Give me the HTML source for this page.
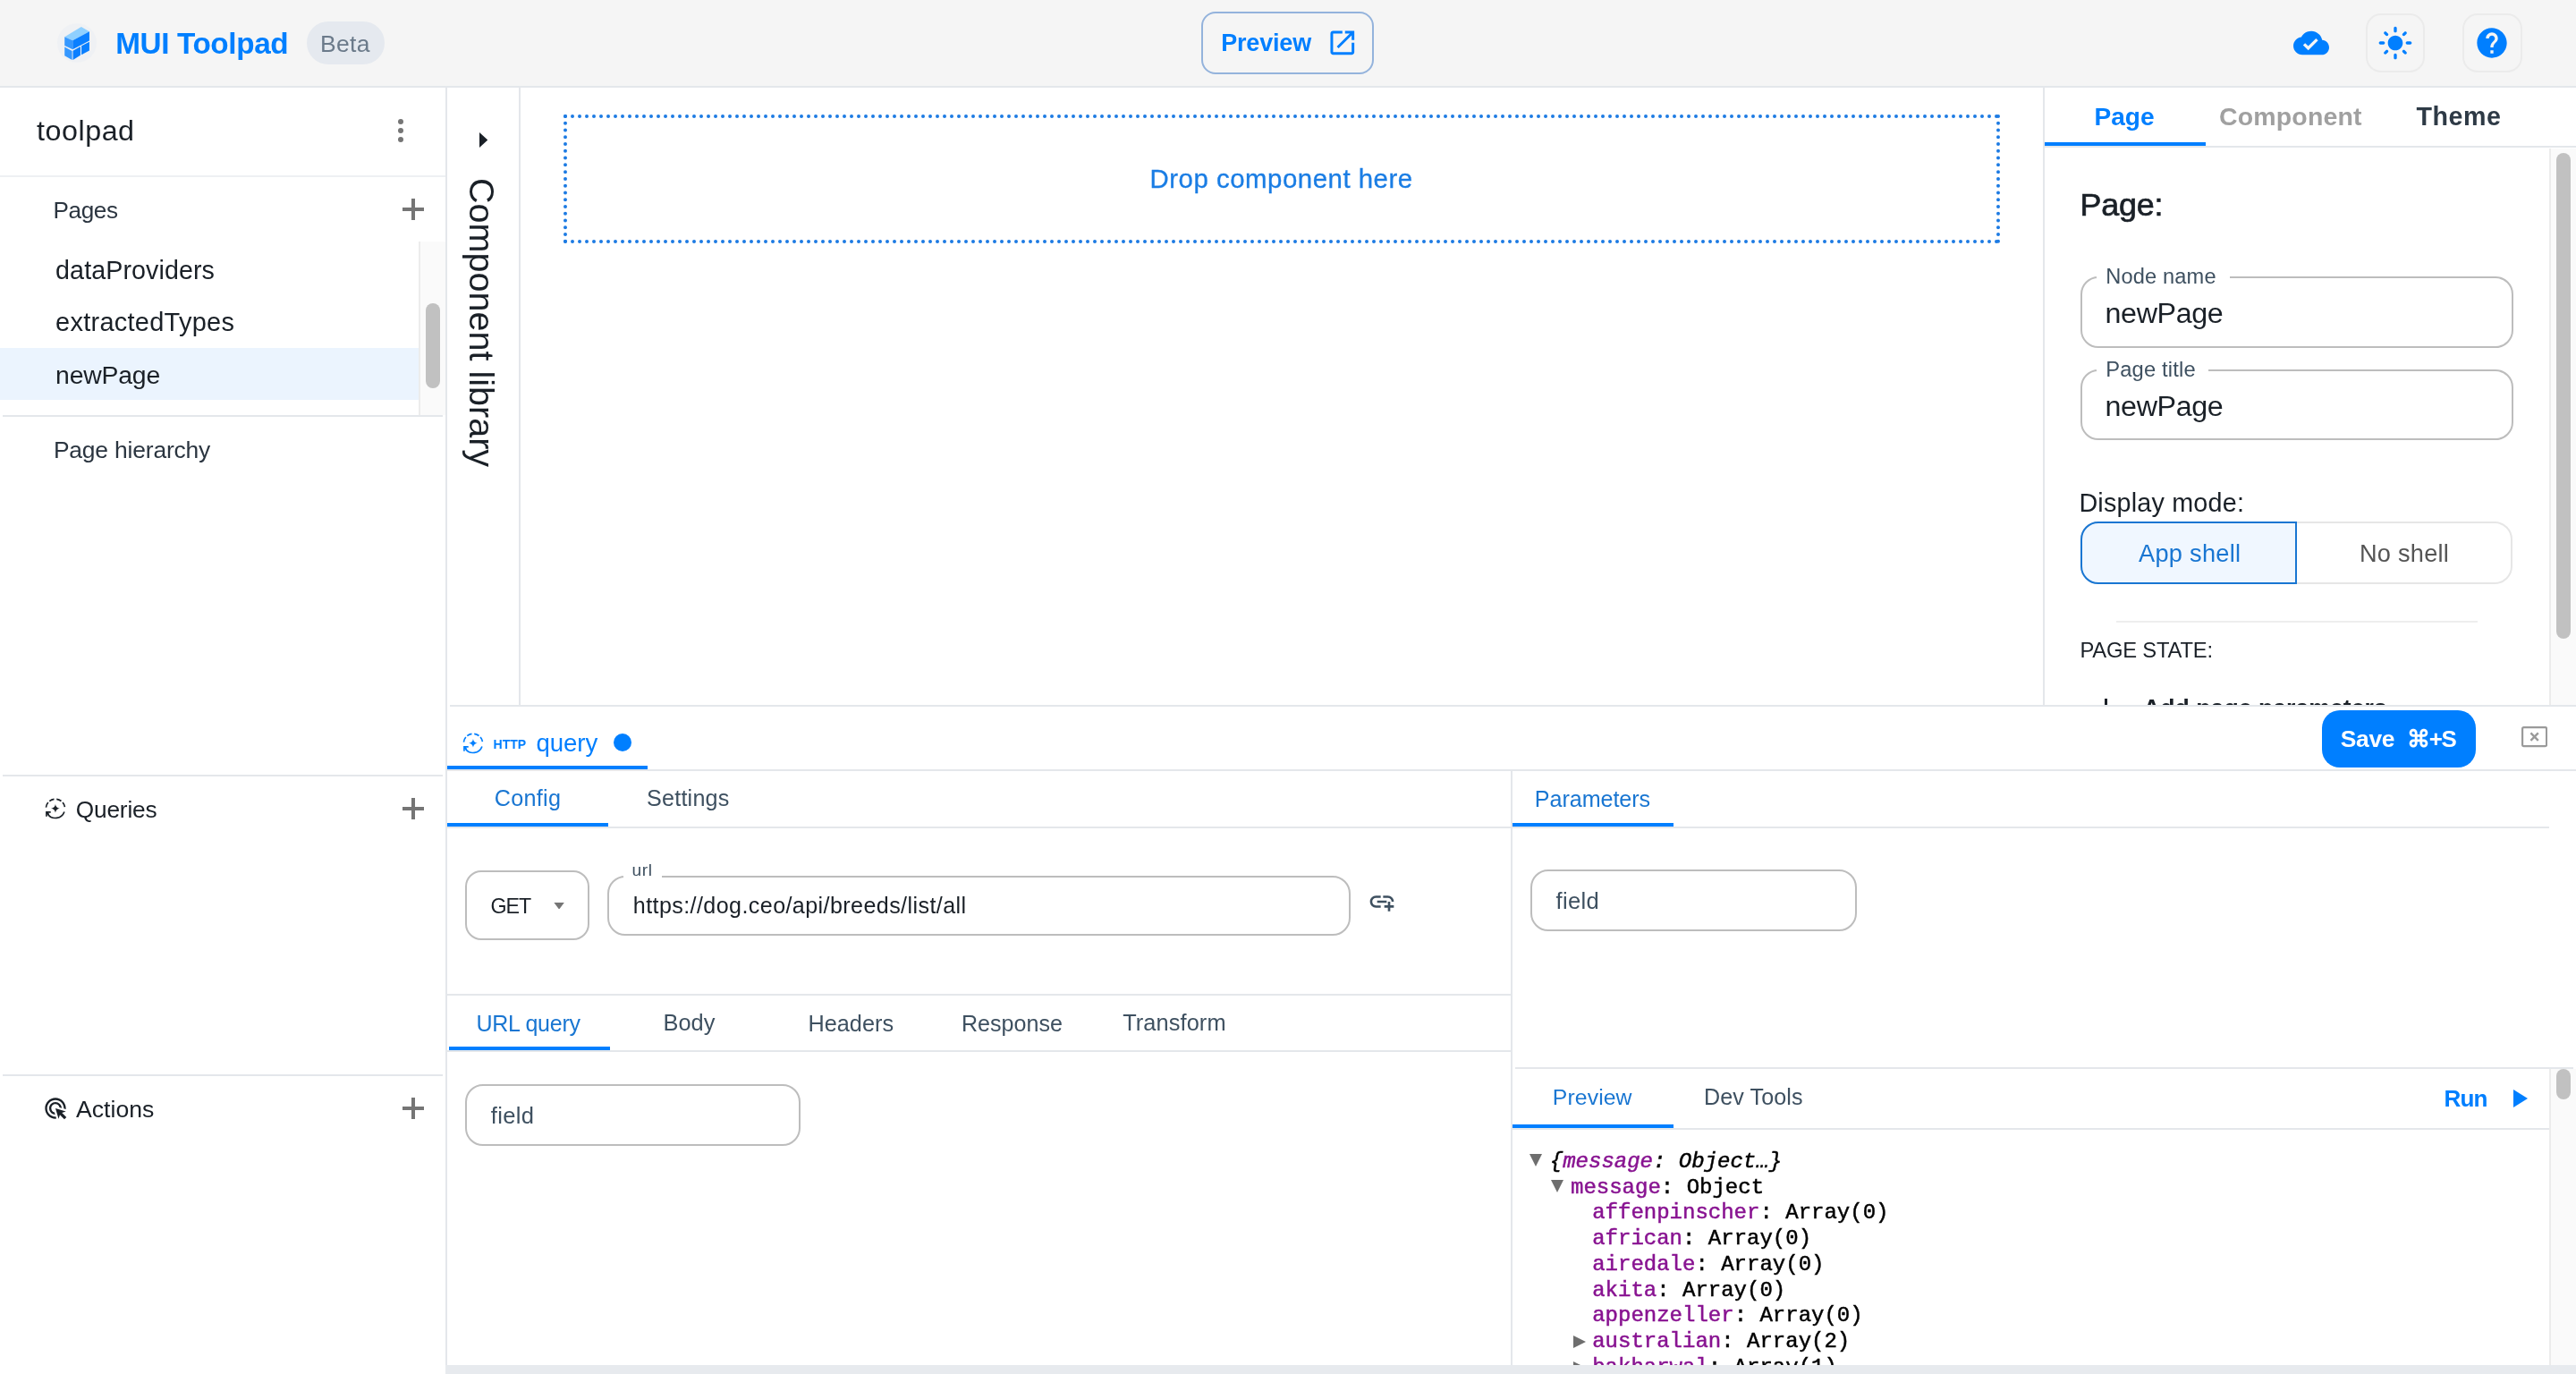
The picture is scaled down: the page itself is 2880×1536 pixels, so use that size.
<!DOCTYPE html>
<html><head><meta charset="utf-8"><title>MUI Toolpad</title>
<style>
html,body{margin:0;padding:0;background:#fff;overflow:hidden}
#root{zoom:2;position:relative;width:1440px;height:768px;overflow:hidden;will-change:transform}
.t{position:absolute;white-space:nowrap;line-height:normal;font-family:"Liberation Sans",sans-serif}
.r{position:absolute}
@media (max-width:2000px){#root{zoom:1}}
</style></head><body><div id="root">
<div class="r" style="left:0px;top:0px;width:1440px;height:48px;background:#f5f5f5"></div>
<div class="r" style="left:0px;top:48px;width:1440px;height:1px;background:#e4e7eb"></div>
<div class="r" style="left:32px;top:12.8px;width:22px;height:22px;background:#edf0f4;border-radius:50%;opacity:.8"></div>
<svg class="r" style="left:35.8px;top:14.3px;width:14.2px;height:19.1px" viewBox="335 270 610 820">
<polygon points="340,535 740,290 935,405 535,620" fill="#8fd0ff"/>
<polygon points="340,535 535,620 535,835 340,745" fill="#3598ff"/>
<polygon points="535,620 935,405 935,625 535,835" fill="#0a7fff"/>
<polygon points="340,775 520,870 520,1085 340,985" fill="#3598ff"/>
<polygon points="540,865 720,765 720,975 540,1085" fill="#0a7fff"/>
<polygon points="745,750 935,650 935,860 745,960" fill="#0a7fff"/>
</svg>
<div class="t" style="left:64.60px;top:15.20px;font-size:16.635px;letter-spacing:-0.184px;font-weight:700;font-style:normal;color:#007fff;font-family:'Liberation Sans',sans-serif;">MUI Toolpad</div>
<div class="r" style="left:171.5px;top:12px;width:43.5px;height:24px;background:#e5e9ef;border-radius:12px"></div>
<div class="t" style="left:179.00px;top:17.01px;font-size:13.243px;letter-spacing:0.179px;font-weight:400;font-style:normal;color:#6b7a8a;font-family:'Liberation Sans',sans-serif;">Beta</div>
<div class="r" style="left:671.6px;top:6.6px;width:96.6px;height:34.8px;box-sizing:border-box;border:1px solid #94b3dc;border-radius:8px"></div>
<div class="t" style="left:682.60px;top:16.25px;font-size:13.474px;letter-spacing:-0.073px;font-weight:700;font-style:normal;color:#007fff;font-family:'Liberation Sans',sans-serif;">Preview</div>
<svg class="r" style="left:741.65px;top:14.95px;width:17.8px;height:17.8px" viewBox="0 0 24 24"><path fill="#007fff" d="M19 19H5V5h7V3H5c-1.11 0-2 .9-2 2v14c0 1.1.89 2 2 2h14c1.1 0 2-.9 2-2v-7h-2v7zM14 3v2h3.59l-9.83 9.83 1.41 1.41L19 6.41V10h2V3h-7z"/></svg>
<svg class="r" style="left:1282px;top:14.2px;width:20px;height:20px" viewBox="0 0 24 24"><path fill="#007fff" d="M19.35 10.04C18.67 6.59 15.64 4 12 4 9.11 4 6.6 5.64 5.35 8.04 2.34 8.36 0 10.91 0 14c0 3.31 2.69 6 6 6h13c2.76 0 5-2.24 5-5 0-2.64-2.05-4.78-4.65-4.96zM10 17l-3.5-3.5 1.41-1.41L10 14.17 15.18 9l1.41 1.41L10 17z"/></svg>
<div class="r" style="left:1322.3px;top:7.45px;width:33.1px;height:33.1px;box-sizing:border-box;border:1px solid #ebebeb;border-radius:8.5px"></div>
<svg class="r" style="left:1329px;top:14px;width:20px;height:20px" viewBox="0 0 24 24"><path fill="#007fff" d="M12 7c-2.76 0-5 2.24-5 5s2.24 5 5 5 5-2.24 5-5-2.24-5-5-5zM2 13h2c.55 0 1-.45 1-1s-.45-1-1-1H2c-.55 0-1 .45-1 1s.45 1 1 1zm18 0h2c.55 0 1-.45 1-1s-.45-1-1-1h-2c-.55 0-1 .45-1 1s.45 1 1 1zM11 2v2c0 .55.45 1 1 1s1-.45 1-1V2c0-.55-.45-1-1-1s-1 .45-1 1zm0 18v2c0 .55.45 1 1 1s1-.45 1-1v-2c0-.55-.45-1-1-1s-1 .45-1 1zM5.99 4.58c-.39-.39-1.03-.39-1.41 0-.39.39-.39 1.03 0 1.41l1.06 1.06c.39.39 1.03.39 1.41 0s.39-1.03 0-1.41L5.99 4.58zm12.37 12.37c-.39-.39-1.03-.39-1.41 0-.39.39-.39 1.03 0 1.41l1.06 1.06c.39.39 1.03.39 1.41 0 .39-.39.39-1.03 0-1.41l-1.06-1.06zm1.06-10.96c.39-.39.39-1.03 0-1.41-.39-.39-1.03-.39-1.41 0l-1.06 1.06c-.39.39-.39 1.03 0 1.41s1.03.39 1.41 0l1.06-1.06zM7.05 18.36c.39-.39.39-1.03 0-1.41-.39-.39-1.03-.39-1.41 0l-1.06 1.06c-.39.39-.39 1.03 0 1.41s1.03.39 1.41 0l1.06-1.06z"/></svg>
<div class="r" style="left:1376.4px;top:7.45px;width:33.4px;height:33.1px;box-sizing:border-box;border:1px solid #ebebeb;border-radius:8.5px"></div>
<svg class="r" style="left:1383px;top:14px;width:20px;height:20px" viewBox="0 0 24 24"><path fill="#007fff" d="M12 2C6.48 2 2 6.48 2 12s4.48 10 10 10 10-4.48 10-10S17.52 2 12 2zm1 17h-2v-2h2v2zm2.07-7.75-.9.92C13.45 12.9 13 13.5 13 15h-2v-.5c0-1.1.45-2.1 1.17-2.83l1.24-1.26c.37-.36.59-.86.59-1.41 0-1.1-.9-2-2-2s-2 .9-2 2H8c0-2.21 1.79-4 4-4s4 1.79 4 4c0 .88-.36 1.68-.93 2.25z"/></svg>
<div class="r" style="left:249px;top:49px;width:1px;height:719px;background:#e4e7eb"></div>
<div class="t" style="left:20.50px;top:64.15px;font-size:16.132px;letter-spacing:0.271px;font-weight:400;font-style:normal;color:#1a2027;font-family:'Liberation Sans',sans-serif;">toolpad</div>
<div class="r" style="left:222.3px;top:66.30000000000001px;width:3.2px;height:3.2px;background:#757575;border-radius:50%"></div>
<div class="r" style="left:222.3px;top:71.45px;width:3.2px;height:3.2px;background:#757575;border-radius:50%"></div>
<div class="r" style="left:222.3px;top:76.4px;width:3.2px;height:3.2px;background:#757575;border-radius:50%"></div>
<div class="r" style="left:0px;top:98px;width:249px;height:1px;background:#eef0f3"></div>
<div class="t" style="left:29.75px;top:110.10px;font-size:13.043px;letter-spacing:-0.191px;font-weight:400;font-style:normal;color:#2b3540;font-family:'Liberation Sans',sans-serif;">Pages</div>
<div class="r" style="left:225px;top:116.15px;width:12px;height:1.7px;background:#757575"></div>
<div class="r" style="left:230.15px;top:111px;width:1.7px;height:12px;background:#757575"></div>
<div class="r" style="left:0px;top:194.6px;width:234px;height:29px;background:#ebf4fe"></div>
<div class="t" style="left:31.05px;top:143.02px;font-size:14.339px;letter-spacing:0.043px;font-weight:400;font-style:normal;color:#1a2027;font-family:'Liberation Sans',sans-serif;">dataProviders</div>
<div class="t" style="left:31.05px;top:171.88px;font-size:14.492px;letter-spacing:0.128px;font-weight:400;font-style:normal;color:#1a2027;font-family:'Liberation Sans',sans-serif;">extractedTypes</div>
<div class="t" style="left:31.05px;top:201.27px;font-size:14.181px;letter-spacing:-0.099px;font-weight:400;font-style:normal;color:#1a2027;font-family:'Liberation Sans',sans-serif;">newPage</div>
<div class="r" style="left:234px;top:135px;width:15px;height:97px;background:#fafafa;box-sizing:border-box;border-left:1px solid #ececec"></div>
<div class="r" style="left:238px;top:169.5px;width:8px;height:47.5px;background:#c1c1c1;border-radius:4px"></div>
<div class="r" style="left:1.5px;top:232px;width:246px;height:1px;background:#e4e7eb"></div>
<div class="t" style="left:29.94px;top:244.24px;font-size:13.212px;letter-spacing:-0.084px;font-weight:400;font-style:normal;color:#2b3540;font-family:'Liberation Sans',sans-serif;">Page hierarchy</div>
<div class="r" style="left:1.5px;top:433px;width:246px;height:1px;background:#e4e7eb"></div>
<svg class="r" style="left:23.0px;top:444.0px;width:16px;height:16px" viewBox="0 0 1374 1374" fill="none" stroke="#1a2027" stroke-width="72">
<path d="M233,625 A455,455 0 0 1 336,388 M399,326 A455,455 0 0 1 622,229 M740,228 A455,455 0 0 1 965,321 M1034,388 A455,455 0 0 1 1134,609 M1113,836 A455,455 0 0 1 312,941"/><path d="M255,1065 L255,855 L460,855 M255,855 L370,970"/><path d="M685,470 Q712,652 890,680 Q712,708 685,885 Q658,708 475,680 Q658,652 685,470Z" fill="#1a2027" stroke="none"/></svg>
<div class="t" style="left:42.40px;top:445.02px;font-size:13.132px;letter-spacing:-0.091px;font-weight:400;font-style:normal;color:#1a2027;font-family:'Liberation Sans',sans-serif;">Queries</div>
<div class="r" style="left:225px;top:451.15px;width:12px;height:1.7px;background:#757575"></div>
<div class="r" style="left:230.15px;top:446px;width:1.7px;height:12px;background:#757575"></div>
<div class="r" style="left:1.5px;top:600.5px;width:246px;height:1px;background:#e4e7eb"></div>
<svg class="r" style="left:24px;top:612.5px;width:14px;height:14px" viewBox="0 0 24 24"><path fill="#1a2027" d="M11.71 17.99C8.53 17.84 6 15.22 6 12c0-3.31 2.69-6 6-6 3.22 0 5.84 2.53 5.99 5.71l-2.1-.63C15.48 9.31 13.89 8 12 8c-2.21 0-4 1.79-4 4 0 1.89 1.31 3.48 3.08 3.89l.63 2.1zM22 12c0 .3-.01.6-.04.9l-1.97-.59c.01-.1.01-.21.01-.31 0-4.42-3.58-8-8-8s-8 3.58-8 8 3.58 8 8 8c.1 0 .21 0 .31-.01l.59 1.97c-.3.03-.6.04-.9.04-5.52 0-10-4.48-10-10S6.48 2 12 2s10 4.48 10 10zm-3.77 4.26L22 15l-10-3 3 10 1.26-3.77 4.27 4.27 1.98-1.98-4.28-4.26z"/></svg>
<div class="t" style="left:42.50px;top:612.36px;font-size:13.300px;letter-spacing:0.011px;font-weight:400;font-style:normal;color:#1a2027;font-family:'Liberation Sans',sans-serif;">Actions</div>
<div class="r" style="left:225px;top:618.65px;width:12px;height:1.7px;background:#757575"></div>
<div class="r" style="left:230.15px;top:613.5px;width:1.7px;height:12px;background:#757575"></div>
<div class="r" style="left:290px;top:49px;width:1px;height:345px;background:#e4e7eb"></div>
<svg class="r" style="left:268px;top:73.75px;width:4.6px;height:8.5px" viewBox="0 0 4.6 8.5"><polygon points="0,0 4.6,4.25 0,8.5" fill="#1a2027"/></svg>
<div class="t" style="left:280.40px;top:99.4px;font-size:19.78px;color:#1a2027;transform-origin:0 0;transform:rotate(90deg)">Component library</div>
<div class="r" style="left:315px;top:64px;width:803px;height:72px;box-sizing:border-box;border:2px dotted #1d7be3"></div>
<div class="t" style="left:642.75px;top:91.69px;font-size:14.703px;letter-spacing:0.260px;font-weight:400;font-style:normal;color:#1a7de4;font-family:'Liberation Sans',sans-serif;-webkit-text-stroke-width:0.15px">Drop component here</div>
<div class="r" style="left:1142px;top:49px;width:1px;height:345px;background:#e4e7eb"></div>
<div class="r" style="left:1143px;top:81.5px;width:297px;height:1px;background:#e4e7eb"></div>
<div class="r" style="left:1143px;top:79.5px;width:90px;height:2px;background:#007fff"></div>
<div class="t" style="left:1170.75px;top:57.29px;font-size:14.045px;letter-spacing:0.001px;font-weight:700;font-style:normal;color:#007fff;font-family:'Liberation Sans',sans-serif;">Page</div>
<div class="t" style="left:1240.50px;top:57.11px;font-size:14.247px;letter-spacing:0.079px;font-weight:700;font-style:normal;color:#a0a0a0;font-family:'Liberation Sans',sans-serif;">Component</div>
<div class="t" style="left:1350.75px;top:57.03px;font-size:14.328px;letter-spacing:0.264px;font-weight:700;font-style:normal;color:#2e3a46;font-family:'Liberation Sans',sans-serif;">Theme</div>
<div class="r" style="left:1425px;top:83px;width:15px;height:311px;background:#fafafa;box-sizing:border-box;border-left:1px solid #ececec"></div>
<div class="r" style="left:1429px;top:85.5px;width:8px;height:271.3px;background:#c1c1c1;border-radius:4px"></div>
<div class="t" style="left:1162.75px;top:104.66px;font-size:17.945px;letter-spacing:-0.086px;font-weight:400;font-style:normal;color:#1a2027;font-family:'Liberation Sans',sans-serif;-webkit-text-stroke:0.35px #1a2027">Page:</div>
<div class="r" style="left:1163.2px;top:154.5px;width:241.8px;height:40px;box-sizing:border-box;border:1px solid #bdbdbd;border-radius:10px"></div>
<div class="r" style="left:1171.8px;top:153.5px;width:74.70000000000005px;height:3px;background:#fff"></div>
<div class="t" style="left:1177.10px;top:147.76px;font-size:11.813px;letter-spacing:0.079px;font-weight:400;font-style:normal;color:#3e5060;font-family:'Liberation Sans',sans-serif;">Node name</div>
<div class="t" style="left:1176.80px;top:165.90px;font-size:16.128px;letter-spacing:-0.204px;font-weight:400;font-style:normal;color:#1a2027;font-family:'Liberation Sans',sans-serif;">newPage</div>
<div class="r" style="left:1163.2px;top:206.6px;width:241.8px;height:39.6px;box-sizing:border-box;border:1px solid #bdbdbd;border-radius:10px"></div>
<div class="r" style="left:1171.8px;top:205.6px;width:62.700000000000045px;height:3px;background:#fff"></div>
<div class="t" style="left:1177.10px;top:199.55px;font-size:11.879px;letter-spacing:0.077px;font-weight:400;font-style:normal;color:#3e5060;font-family:'Liberation Sans',sans-serif;">Page title</div>
<div class="t" style="left:1176.80px;top:217.95px;font-size:16.128px;letter-spacing:-0.204px;font-weight:400;font-style:normal;color:#1a2027;font-family:'Liberation Sans',sans-serif;">newPage</div>
<div class="t" style="left:1162.20px;top:272.89px;font-size:14.379px;letter-spacing:0.097px;font-weight:400;font-style:normal;color:#1a2027;font-family:'Liberation Sans',sans-serif;">Display mode:</div>
<div class="r" style="left:1163.2px;top:291.7px;width:241.5px;height:34.6px;box-sizing:border-box;border:1px solid #e6e6e6;border-radius:10px"></div>
<div class="r" style="left:1163.2px;top:291.7px;width:121.05px;height:34.6px;box-sizing:border-box;border:1px solid #1976d2;border-radius:10px 0 0 10px;background:#f0f7ff"></div>
<div class="t" style="left:1195.50px;top:301.29px;font-size:13.607px;letter-spacing:0.134px;font-weight:400;font-style:normal;color:#1976d2;font-family:'Liberation Sans',sans-serif;">App shell</div>
<div class="t" style="left:1319.00px;top:301.31px;font-size:13.585px;letter-spacing:0.123px;font-weight:400;font-style:normal;color:#555;font-family:'Liberation Sans',sans-serif;">No shell</div>
<div class="r" style="left:1182.8px;top:347px;width:202.2px;height:1px;background:#eeeeee"></div>
<div class="t" style="left:1162.70px;top:356.63px;font-size:11.902px;letter-spacing:-0.106px;font-weight:400;font-style:normal;color:#1a2027;font-family:'Liberation Sans',sans-serif;">PAGE STATE:</div>
<div class="r" style="left:1143px;top:380px;width:282px;height:14px;overflow:hidden"><div class="r" style="left:33.6px;top:10.3px;width:1.6px;height:8px;background:#1a2027"></div></div>
<div class="t" style="left:1198.00px;top:387.84px;font-size:13.327px;letter-spacing:0.011px;font-weight:700;font-style:normal;color:#1a2027;font-family:'Liberation Sans',sans-serif;">Add page parameters</div>
<div class="r" style="left:1143px;top:394px;width:297px;height:12px;background:#fff"></div>
<div class="r" style="left:251.5px;top:394px;width:1188.5px;height:1px;background:#e4e7eb"></div>
<div class="r" style="left:250px;top:430px;width:1190px;height:1px;background:#e4e7eb"></div>
<div class="r" style="left:250px;top:428px;width:112px;height:2px;background:#007fff"></div>
<svg class="r" style="left:256.3px;top:407.3px;width:16px;height:16px" viewBox="0 0 1374 1374" fill="none" stroke="#007fff" stroke-width="72">
<path d="M233,625 A455,455 0 0 1 336,388 M399,326 A455,455 0 0 1 622,229 M740,228 A455,455 0 0 1 965,321 M1034,388 A455,455 0 0 1 1134,609 M1113,836 A455,455 0 0 1 312,941"/><path d="M255,1065 L255,855 L460,855 M255,855 L370,970"/><path d="M685,470 Q712,652 890,680 Q712,708 685,885 Q658,708 475,680 Q658,652 685,470Z" fill="#007fff" stroke="none"/></svg>
<div class="t" style="left:275.80px;top:412.04px;font-size:7.026px;letter-spacing:-0.018px;font-weight:700;font-style:normal;color:#007fff;font-family:'Liberation Sans',sans-serif;">HTTP</div>
<div class="t" style="left:299.70px;top:407.50px;font-size:13.809px;letter-spacing:-0.020px;font-weight:400;font-style:normal;color:#007fff;font-family:'Liberation Sans',sans-serif;">query</div>
<div class="r" style="left:342.9px;top:410px;width:10px;height:10px;background:#007fff;border-radius:50%"></div>
<div class="r" style="left:1298.05px;top:397px;width:85.8px;height:31.9px;background:#007fff;border-radius:10px"></div>
<div class="t" style="left:1308.40px;top:405.44px;font-size:13.219px;letter-spacing:-0.169px;font-weight:700;font-style:normal;color:#fff;font-family:'Liberation Sans',sans-serif;">Save</div>
<div class="t" style="left:1345.50px;top:405.67px;font-size:12.956px;letter-spacing:-0.632px;font-weight:700;font-style:normal;color:#fff;font-family:'Liberation Sans',sans-serif;">⌘+S</div>
<svg class="r" style="left:1409.6px;top:406.2px;width:14.6px;height:11.6px" viewBox="0 0 14.6 11.6" fill="none" stroke="#9a9a9a" stroke-width="1.1">
<rect x="0.55" y="0.55" width="13.5" height="10.5" rx="0.8"/><path d="M5.2 3.7l4.2 4.2M9.4 3.7l-4.2 4.2" stroke-width="1.2"/></svg>
<div class="r" style="left:844.5px;top:431px;width:1px;height:332px;background:#e4e7eb"></div>
<div class="r" style="left:250px;top:462px;width:594.5px;height:1px;background:#e4e7eb"></div>
<div class="r" style="left:250px;top:460px;width:90px;height:2px;background:#007fff"></div>
<div class="t" style="left:276.40px;top:439.19px;font-size:12.609px;letter-spacing:0.136px;font-weight:400;font-style:normal;color:#1976d2;font-family:'Liberation Sans',sans-serif;">Config</div>
<div class="t" style="left:361.50px;top:439.23px;font-size:12.568px;letter-spacing:0.113px;font-weight:400;font-style:normal;color:#3e5060;font-family:'Liberation Sans',sans-serif;">Settings</div>
<div class="r" style="left:260.2px;top:486.25px;width:69.2px;height:39.35px;box-sizing:border-box;border:1px solid #bdbdbd;border-radius:9px"></div>
<div class="t" style="left:274.20px;top:499.99px;font-size:11.617px;letter-spacing:-0.487px;font-weight:400;font-style:normal;color:#1a2027;font-family:'Liberation Sans',sans-serif;">GET</div>
<svg class="r" style="left:309.4px;top:504.25px;width:6.1px;height:3.8px" viewBox="0 0 6 4"><polygon points="0,0 6,0 3,4" fill="#757575"/></svg>
<div class="r" style="left:339.7px;top:489.5px;width:415.3px;height:33.6px;box-sizing:border-box;border:1px solid #bdbdbd;border-radius:10px"></div>
<div class="r" style="left:348.4px;top:488.5px;width:21.600000000000023px;height:3px;background:#fff"></div>
<div class="t" style="left:353.25px;top:481.22px;font-size:9.587px;letter-spacing:0.317px;font-weight:400;font-style:normal;color:#3e5060;font-family:'Liberation Sans',sans-serif;">url</div>
<div class="t" style="left:353.90px;top:499.15px;font-size:12.540px;letter-spacing:0.206px;font-weight:400;font-style:normal;color:#1a2027;font-family:'Liberation Sans',sans-serif;">https://dog.ceo/api/breeds/list/all</div>
<svg class="r" style="left:764.7px;top:495.9px;width:16px;height:16px" viewBox="0 0 24 24"><path fill="#3e5060" d="M8 11h8v2H8zm12.1 1H22c0-2.76-2.24-5-5-5h-4v1.9h4c1.71 0 3.1 1.39 3.1 3.1zM3.9 12c0-1.71 1.39-3.1 3.1-3.1h4V7H7c-2.76 0-5 2.24-5 5s2.24 5 5 5h4v-1.9H7c-1.71 0-3.1-1.39-3.1-3.1zM19 12h-2v3h-3v2h3v3h2v-3h3v-2h-3z"/></svg>
<div class="r" style="left:250px;top:555.5px;width:594.5px;height:1px;background:#e4e7eb"></div>
<div class="r" style="left:250px;top:587px;width:594.5px;height:1px;background:#e4e7eb"></div>
<div class="r" style="left:251px;top:585px;width:90px;height:2px;background:#007fff"></div>
<div class="t" style="left:266.20px;top:564.87px;font-size:12.517px;letter-spacing:-0.129px;font-weight:400;font-style:normal;color:#1976d2;font-family:'Liberation Sans',sans-serif;">URL query</div>
<div class="t" style="left:370.70px;top:564.72px;font-size:12.691px;letter-spacing:0.042px;font-weight:400;font-style:normal;color:#3e5060;font-family:'Liberation Sans',sans-serif;">Body</div>
<div class="t" style="left:451.75px;top:564.77px;font-size:12.628px;letter-spacing:0.007px;font-weight:400;font-style:normal;color:#3e5060;font-family:'Liberation Sans',sans-serif;">Headers</div>
<div class="t" style="left:537.50px;top:564.85px;font-size:12.539px;letter-spacing:0.006px;font-weight:400;font-style:normal;color:#3e5060;font-family:'Liberation Sans',sans-serif;">Response</div>
<div class="t" style="left:627.60px;top:564.72px;font-size:12.689px;letter-spacing:0.045px;font-weight:400;font-style:normal;color:#3e5060;font-family:'Liberation Sans',sans-serif;">Transform</div>
<div class="r" style="left:260.0px;top:606.0px;width:187.7px;height:34.4px;box-sizing:border-box;border:1px solid #bdbdbd;border-radius:10px"></div>
<div class="t" style="left:274.40px;top:616.38px;font-size:12.780px;letter-spacing:0.168px;font-weight:400;font-style:normal;color:#3e5060;font-family:'Liberation Sans',sans-serif;">field</div>
<div class="r" style="left:845.5px;top:462px;width:579.5px;height:1px;background:#e4e7eb"></div>
<div class="r" style="left:845.5px;top:460px;width:90px;height:2px;background:#007fff"></div>
<div class="t" style="left:857.90px;top:439.53px;font-size:12.568px;letter-spacing:-0.027px;font-weight:400;font-style:normal;color:#1976d2;font-family:'Liberation Sans',sans-serif;">Parameters</div>
<div class="r" style="left:855.6px;top:486.0px;width:182.4px;height:34.4px;box-sizing:border-box;border:1px solid #bdbdbd;border-radius:10px"></div>
<div class="t" style="left:869.80px;top:496.38px;font-size:12.780px;letter-spacing:0.168px;font-weight:400;font-style:normal;color:#3e5060;font-family:'Liberation Sans',sans-serif;">field</div>
<div class="r" style="left:847px;top:596.5px;width:591.5px;height:1px;background:#e4e7eb"></div>
<div class="r" style="left:845.5px;top:630.5px;width:579.5px;height:1px;background:#e4e7eb"></div>
<div class="r" style="left:845.5px;top:628.5px;width:90px;height:2px;background:#007fff"></div>
<div class="t" style="left:867.90px;top:606.27px;font-size:12.409px;letter-spacing:0.043px;font-weight:400;font-style:normal;color:#1976d2;font-family:'Liberation Sans',sans-serif;">Preview</div>
<div class="t" style="left:952.50px;top:606.13px;font-size:12.559px;letter-spacing:0.044px;font-weight:400;font-style:normal;color:#3e5060;font-family:'Liberation Sans',sans-serif;">Dev Tools</div>
<div class="t" style="left:1366.30px;top:606.71px;font-size:13.027px;letter-spacing:-0.430px;font-weight:700;font-style:normal;color:#007fff;font-family:'Liberation Sans',sans-serif;">Run</div>
<svg class="r" style="left:1405px;top:609px;width:8px;height:10px" viewBox="0 0 8 10"><polygon points="0,0 8,5 0,10" fill="#007fff"/></svg>
<div class="r" style="left:1425px;top:597.5px;width:15px;height:165.5px;background:#fafafa;box-sizing:border-box;border-left:1px solid #ececec"></div>
<div class="r" style="left:1429px;top:597.6px;width:8px;height:16.9px;background:#c1c1c1;border-radius:4px"></div>
<div class="r" style="left:846px;top:632px;width:579px;height:131px;overflow:hidden">
<svg class="r" style="left:9.05px;top:13.05px;width:7px;height:7px" viewBox="0 0 7 7"><polygon points="0,0 7,0 3.5,7" fill="#6e6e6e"/></svg>
<div class="t" style="left:20.399999999999977px;top:10.51px;font-size:12px;color:#000;font-family:'Liberation Mono',monospace;-webkit-text-stroke-width:0.25px"><i>{<span style="color:#881391">message</span>: Object…}</i></div>
<svg class="r" style="left:21.10px;top:27.41px;width:7px;height:7px" viewBox="0 0 7 7"><polygon points="0,0 7,0 3.5,7" fill="#6e6e6e"/></svg>
<div class="t" style="left:32px;top:24.87px;font-size:12px;color:#000;font-family:'Liberation Mono',monospace;-webkit-text-stroke-width:0.25px"><span style="color:#881391">message</span>: Object</div>
<div class="t" style="left:44.10000000000002px;top:39.23px;font-size:12px;color:#000;font-family:'Liberation Mono',monospace;-webkit-text-stroke-width:0.25px"><span style="color:#881391">affenpinscher</span>: Array(0)</div>
<div class="t" style="left:44.10000000000002px;top:53.59px;font-size:12px;color:#000;font-family:'Liberation Mono',monospace;-webkit-text-stroke-width:0.25px"><span style="color:#881391">african</span>: Array(0)</div>
<div class="t" style="left:44.10000000000002px;top:67.95px;font-size:12px;color:#000;font-family:'Liberation Mono',monospace;-webkit-text-stroke-width:0.25px"><span style="color:#881391">airedale</span>: Array(0)</div>
<div class="t" style="left:44.10000000000002px;top:82.31px;font-size:12px;color:#000;font-family:'Liberation Mono',monospace;-webkit-text-stroke-width:0.25px"><span style="color:#881391">akita</span>: Array(0)</div>
<div class="t" style="left:44.10000000000002px;top:96.67px;font-size:12px;color:#000;font-family:'Liberation Mono',monospace;-webkit-text-stroke-width:0.25px"><span style="color:#881391">appenzeller</span>: Array(0)</div>
<svg class="r" style="left:33.45px;top:114.72px;width:7px;height:7px" viewBox="0 0 7 7"><polygon points="0,0 7,3.5 0,7" fill="#6e6e6e"/></svg>
<div class="t" style="left:44.10000000000002px;top:111.03px;font-size:12px;color:#000;font-family:'Liberation Mono',monospace;-webkit-text-stroke-width:0.25px"><span style="color:#881391">australian</span>: Array(2)</div>
<svg class="r" style="left:33.45px;top:129.08px;width:7px;height:7px" viewBox="0 0 7 7"><polygon points="0,0 7,3.5 0,7" fill="#6e6e6e"/></svg>
<div class="t" style="left:44.10000000000002px;top:125.39px;font-size:12px;color:#000;font-family:'Liberation Mono',monospace;-webkit-text-stroke-width:0.25px"><span style="color:#881391">bakharwal</span>: Array(1)</div>
</div>
<div class="r" style="left:249px;top:763px;width:1191px;height:5px;background:#e7eaee"></div>
</div></body></html>
